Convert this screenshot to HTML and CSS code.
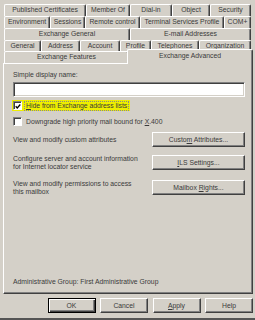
FILE: index.html
```html
<!DOCTYPE html>
<html lang="en">
<head>
  <meta charset="UTF-8" />
  <title>Properties</title>
  <link rel="stylesheet" href="styles.css">
</head>
<body>
  <div class="dialog">
    <div class="tabs">
      <div class="tab-row row-1">
        <div class="tab">Published Certificates</div>
        <div class="tab">Member Of</div>
        <div class="tab">Dial-in</div>
        <div class="tab">Object</div>
        <div class="tab">Security</div>
      </div>
      <div class="tab-row row-2">
        <div class="tab">Environment</div>
        <div class="tab">Sessions</div>
        <div class="tab">Remote control</div>
        <div class="tab">Terminal Services Profile</div>
        <div class="tab">COM+</div>
      </div>
      <div class="tab-row row-3">
        <div class="tab">Exchange General</div>
        <div class="tab">E-mail Addresses</div>
      </div>
      <div class="tab-row row-4">
        <div class="tab">General</div>
        <div class="tab">Address</div>
        <div class="tab">Account</div>
        <div class="tab">Profile</div>
        <div class="tab">Telephones</div>
        <div class="tab">Organization</div>
      </div>
      <div class="tab-row row-5">
        <div class="tab">Exchange Features</div>
        <div class="tab active">Exchange Advanced</div>
      </div>
    </div>

    <div class="panel">
      <div class="label">Simple display name:</div>
      <div class="textbox"></div>

      <div class="check-row marked">
        <span class="checkbox">
          <svg width="7" height="7" viewBox="0 0 7 7"><polyline points="0.8,3.2 2.6,5.2 6.2,1.2" fill="none" stroke="#000" stroke-width="1.5"/></svg>
        </span>
        <span class="check-text focus"><u>H</u>ide from Exchange address lists</span>
      </div>
      <div class="check-row second">
        <span class="checkbox"></span>
        <span class="check-text">Downgrade high priority mail bound for <u>X</u>.400</span>
      </div>

      <div class="action-row first">
        <div class="desc">View and modify custom attributes</div>
        <button class="btn wide">Custo<u>m</u> Attributes...</button>
      </div>
      <div class="action-row second">
        <div class="desc">Configure server and account information<br>for Internet locator service</div>
        <button class="btn wide"><u>I</u>LS Settings...</button>
      </div>
      <div class="action-row third">
        <div class="desc">View and modify permissions to access<br>this mailbox</div>
        <button class="btn wide">Mailbox <u>R</u>ights...</button>
      </div>

      <div class="note">Administrative Group: First Administrative Group</div>
    </div>

    <div class="footer">
      <button class="btn default">OK</button>
      <button class="btn">Cancel</button>
      <button class="btn"><u>A</u>pply</button>
      <button class="btn">Help</button>
    </div>
  </div>
</body>
</html>
```
FILE: styles.css
```css
* {
  box-sizing: border-box;
}
body {
  margin: 0;
  background-color: #d4d0c8;
  font-family: "Liberation Sans", Arial, sans-serif;
  font-size: 6.8px;
  color: #3a3a3a;
}
.dialog {
  width: 255px;
  height: 320px;
  padding: 4px 2px 0 3px;
  display: flex;
  flex-direction: column;
  border-bottom: 2px solid #555;
}
.tabs {
  margin: 0 1px;
  display: flex;
  flex-direction: column;
}
.tab-row {
  display: grid;
  height: 12px;
}
.row-1 { grid-template-columns: 82px 44px 42px 38px 41px; }
.row-2 { grid-template-columns: 46px 35px 55px 84px 27px; }
.row-3 { grid-template-columns: 126px 121px; }
.row-4 { grid-template-columns: 37px 39px 40px 31px 48px 52px; height: 11px; }
.row-5 { grid-template-columns: 125px 122px; }
.tab {
  border-top: 1px solid #fff;
  border-left: 1px solid #fff;
  border-right: 1px solid #404040;
  box-shadow: inset -1px 0 #808080;
  border-radius: 2px 2px 0 0;
  background-color: #d4d0c8;
  text-align: center;
  line-height: 10px;
  white-space: nowrap;
  overflow: hidden;
}
.tab.active {
  position: relative;
  z-index: 1;
  margin: -2px -2px -1px -2px;
  line-height: 12px;
}
.panel {
  flex: none;
  height: 231px;
  border: 1px solid;
  border-color: #fff #404040 #404040 #fff;
  box-shadow: inset -1px -1px #808080;
  padding: 7px 7px 7px 9px;
  display: flex;
  flex-direction: column;
}
.label {
  line-height: 8px;
}
.textbox {
  height: 15px;
  margin-top: 3px;
  background-color: #fff;
  border: 1px solid;
  border-color: #808080 #fff #fff #808080;
  box-shadow: inset 1px 1px #404040, inset -1px -1px #d4d0c8;
}
.check-row {
  display: flex;
  align-items: center;
  height: 11px;
  gap: 3px;
}
.check-row.marked {
  margin-top: 3px;
  margin-left: -1px;
  padding-left: 1px;
  width: 118px;
  background-color: #eeee00;
}
.check-row.second {
  margin-top: 5px;
}
.checkbox {
  flex: none;
  width: 9px;
  height: 9px;
  background-color: #fff;
  border: 1px solid;
  border-color: #808080 #fff #fff #808080;
  box-shadow: inset 1px 1px #404040;
  display: flex;
  align-items: center;
  justify-content: center;
}
.checkbox svg {
  display: block;
  margin: 1px 0 0 1px;
}
.check-text {
  line-height: 8px;
  padding: 0 1px;
  white-space: nowrap;
}
.check-text.focus {
  outline: 1px dotted #888;
}
.action-row {
  display: flex;
  align-items: center;
  justify-content: space-between;
  height: 15px;
}
.action-row.first { margin-top: 5px; }
.action-row.second { margin-top: 8px; }
.action-row.third { margin-top: 10px; }
.desc {
  line-height: 7.5px;
  white-space: nowrap;
}
.btn {
  width: 48px;
  height: 15px;
  padding: 0;
  font: inherit;
  color: #3a3a3a;
  background-color: #d4d0c8;
  border: 1px solid;
  border-color: #fff #404040 #404040 #fff;
  box-shadow: inset -1px -1px #808080;
  line-height: 12px;
  text-align: center;
}
.btn.wide {
  width: 93px;
}
.btn.default {
  border-color: #000;
  box-shadow: inset 1px 1px #fff, inset -1px -1px #404040, inset -2px -2px #808080;
}
.note {
  margin-top: auto;
  line-height: 8px;
}
.footer {
  display: flex;
  justify-content: flex-end;
  gap: 4.5px;
  margin-top: 4px;
}
```
